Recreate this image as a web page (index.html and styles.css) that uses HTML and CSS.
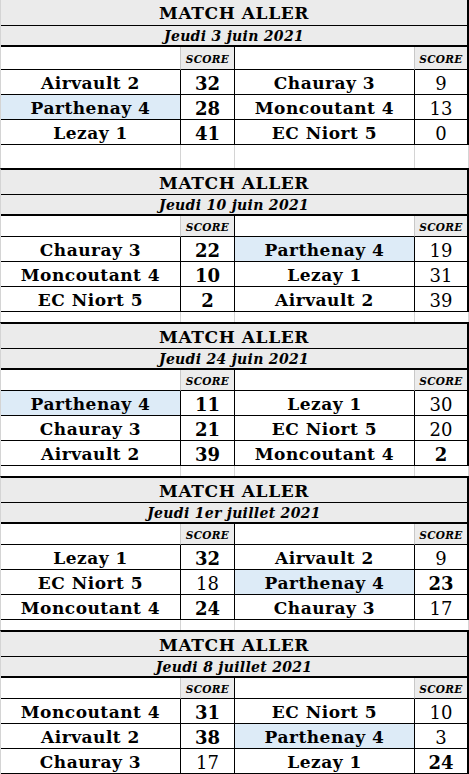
FILE: index.html
```html
<!DOCTYPE html>
<html lang="fr">
<head>
<meta charset="utf-8">
<title>Match aller</title>
<link rel="stylesheet" href="styles.css">
</head>
<body>
<main class="sheet">

  <section class="sec first">
    <div class="hdr">MATCH ALLER</div>
    <div class="sub">Jeudi 3 juin 2021</div>
    <div class="sh blank"></div><div class="sh score">SCORE</div><div class="sh blank"></div><div class="sh score last">SCORE</div>
    <div class="team">Airvault 2</div><div class="pts b">32</div><div class="team">Chauray 3</div><div class="pts last">9</div>
    <div class="team hl">Parthenay 4</div><div class="pts b">28</div><div class="team">Moncoutant 4</div><div class="pts last">13</div>
    <div class="team">Lezay 1</div><div class="pts b">41</div><div class="team">EC Niort 5</div><div class="pts last">0</div>
    <div class="gap"></div><div class="gap"></div><div class="gap"></div><div class="gap"></div>
  </section>

  <section class="sec">
    <div class="hdr">MATCH ALLER</div>
    <div class="sub">Jeudi 10 juin 2021</div>
    <div class="sh blank"></div><div class="sh score">SCORE</div><div class="sh blank"></div><div class="sh score last">SCORE</div>
    <div class="team">Chauray 3</div><div class="pts b">22</div><div class="team hl">Parthenay 4</div><div class="pts last">19</div>
    <div class="team">Moncoutant 4</div><div class="pts b">10</div><div class="team">Lezay 1</div><div class="pts last">31</div>
    <div class="team">EC Niort 5</div><div class="pts b">2</div><div class="team">Airvault 2</div><div class="pts last">39</div>
    <div class="gap"></div><div class="gap"></div><div class="gap"></div><div class="gap"></div>
  </section>

  <section class="sec">
    <div class="hdr">MATCH ALLER</div>
    <div class="sub">Jeudi 24 juin 2021</div>
    <div class="sh blank"></div><div class="sh score">SCORE</div><div class="sh blank"></div><div class="sh score last">SCORE</div>
    <div class="team hl">Parthenay 4</div><div class="pts b">11</div><div class="team">Lezay 1</div><div class="pts last">30</div>
    <div class="team">Chauray 3</div><div class="pts b">21</div><div class="team">EC Niort 5</div><div class="pts last">20</div>
    <div class="team">Airvault 2</div><div class="pts b">39</div><div class="team">Moncoutant 4</div><div class="pts last b">2</div>
    <div class="gap"></div><div class="gap"></div><div class="gap"></div><div class="gap"></div>
  </section>

  <section class="sec">
    <div class="hdr">MATCH ALLER</div>
    <div class="sub">Jeudi 1er juillet 2021</div>
    <div class="sh blank"></div><div class="sh score">SCORE</div><div class="sh blank"></div><div class="sh score last">SCORE</div>
    <div class="team">Lezay 1</div><div class="pts b">32</div><div class="team">Airvault 2</div><div class="pts last">9</div>
    <div class="team">EC Niort 5</div><div class="pts">18</div><div class="team hl">Parthenay 4</div><div class="pts last b">23</div>
    <div class="team">Moncoutant 4</div><div class="pts b">24</div><div class="team">Chauray 3</div><div class="pts last">17</div>
    <div class="gap"></div><div class="gap"></div><div class="gap"></div><div class="gap"></div>
  </section>

  <section class="sec">
    <div class="hdr">MATCH ALLER</div>
    <div class="sub">Jeudi 8 juillet 2021</div>
    <div class="sh blank"></div><div class="sh score">SCORE</div><div class="sh blank"></div><div class="sh score last">SCORE</div>
    <div class="team">Moncoutant 4</div><div class="pts b">31</div><div class="team">EC Niort 5</div><div class="pts last">10</div>
    <div class="team">Airvault 2</div><div class="pts b">38</div><div class="team hl">Parthenay 4</div><div class="pts last">3</div>
    <div class="team">Chauray 3</div><div class="pts">17</div><div class="team">Lezay 1</div><div class="pts last b">24</div>
    <div class="gap"></div><div class="gap"></div><div class="gap"></div><div class="gap"></div>
  </section>

</main>
</body>
</html>
```
FILE: styles.css
```css
* { box-sizing: border-box; }
html, body { margin: 0; padding: 0; background: #fff; }
body { font-family: "DejaVu Serif", "Liberation Serif", serif; color: #000; }
.sheet { width: 469px; }

.sec {
  display: grid;
  grid-template-columns: 180px 54px 180px 54px;
  border-left: 1px solid #d4d4d4;
  border-top: 2px solid #000;
}
.sec.first { border-top: 0; }

.hdr {
  grid-column: 1 / -1;
  height: 25px;
  background: #ebebeb;
  border-bottom: 1px solid #000;
  border-right: 2px solid #000;
  display: flex; align-items: center; justify-content: center;
  font-weight: bold; font-size: 17px; letter-spacing: 0.6px;
  padding-top: 1px;
}
.first .hdr { height: 26px; }

.sub {
  grid-column: 1 / -1;
  height: 21px;
  background: #ebebeb;
  border-bottom: 2px solid #000;
  border-right: 2px solid #000;
  display: flex; align-items: center; justify-content: center;
  font-weight: bold; font-style: italic; font-size: 14px; letter-spacing: 0.3px;
}

.sh {
  height: 21px;
  border-bottom: 1px solid #000;
  border-right: 1px solid #c8c8c8;
  display: flex; align-items: center; justify-content: center;
}
.first .sh { height: 23px; }
.sh.score {
  background: #ececec;
  border-right: 1px solid #000;
  font-weight: bold; font-style: italic; font-size: 10.5px; letter-spacing: 0.3px;
  padding-top: 2px;
}
.sh.last, .pts.last { border-right: 2px solid #000; }

.team, .pts {
  height: 25px;
  border-bottom: 1px solid #000;
  border-right: 1px solid #000;
  display: flex; align-items: center; justify-content: center;
  padding-top: 2px;
}
.team { font-weight: bold; font-size: 17px; letter-spacing: 0.5px; }
.team.hl { background: #ddebf7; }
.pts { font-size: 18px; font-weight: normal; }
.pts.b { font-weight: bold; }

.gap {
  height: 10px;
  border-right: 1px solid #d4d4d4;
}
.first .gap { height: 23px; }
```
